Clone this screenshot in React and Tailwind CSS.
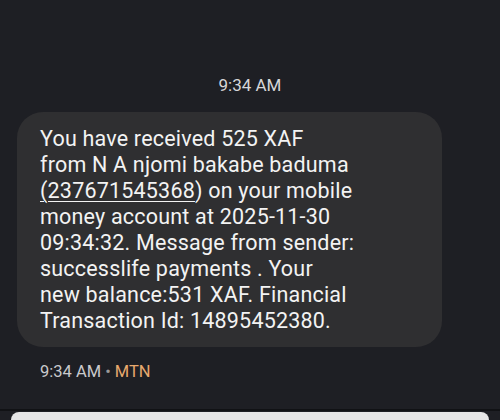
export default function App() {
  return (
    <div
      className="w-[500px] h-[420px] overflow-hidden bg-[#1e1f24] flex flex-col"
      style={{ fontFamily: "Roboto, 'Liberation Sans', sans-serif" }}
    >
      <div className="pt-[74px] text-center text-[17px] leading-[22px] text-[#d6d6d8]">9:34 AM</div>

      <div className="mt-[16px] ml-[17px] w-[425px] rounded-[26px] bg-[#2f2f31] pl-[23px] pr-4 pt-[14px] pb-[13px]">
        <p className="text-[21.5px] leading-[26px] tracking-[0.2px] text-[#f3f3f3]">
          You have received 525 XAF
          <br />
          from N A njomi bakabe baduma
          <br />
          <span className="underline underline-offset-[3px] decoration-1">(237671545368</span>) on your mobile
          <br />
          money account at 2025-11-30
          <br />
          09:34:32. Message from sender:
          <br />
          successlife payments . Your
          <br />
          new balance:531 XAF. Financial
          <br />
          Transaction Id: 14895452380.
        </p>
      </div>

      <div className="mt-[15px] ml-[40px] text-[16.5px] leading-[20px] text-[#c9c9cc]">
        9:34 AM <span className="text-[#9a9a9a]">•</span> <span className="text-[#e8a96e]">MTN</span>
      </div>

      <div className="mt-auto border-t-2 border-[#111215] pt-[1px] px-[11px]">
        <div className="h-[8px] rounded-t-[8px] bg-[#e6e6e6]" />
      </div>
    </div>
  );
}
